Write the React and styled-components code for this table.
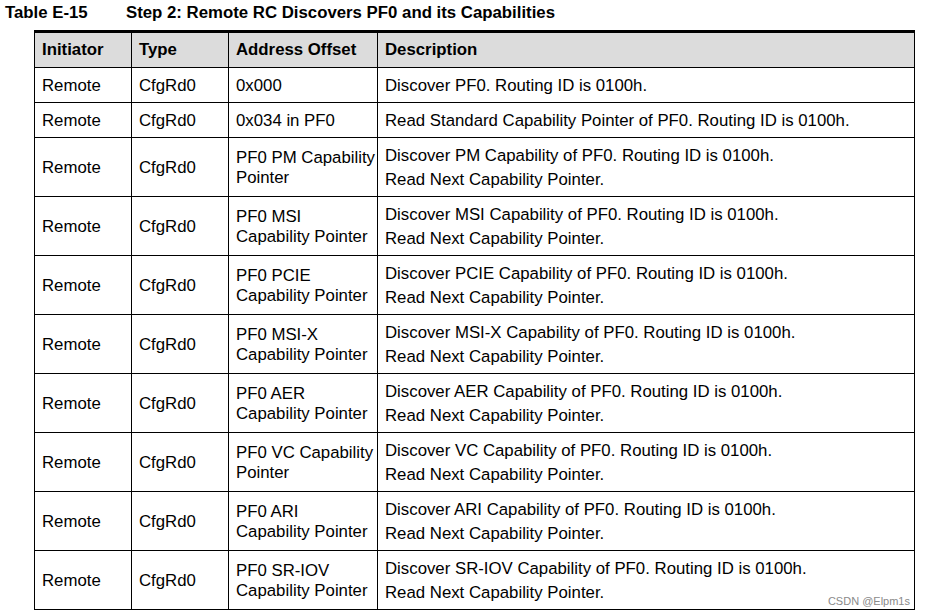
import React from 'react'
import styled, { createGlobalStyle } from 'styled-components'

const GlobalStyle = createGlobalStyle`
    body {
        margin: 0;
        background: #fff;
        font-family: "Liberation Sans", Arial, sans-serif;
        color: #000;
    }
`;

const Page = styled.div`
    position: relative;
    width: 925px;
    height: 616px;
    overflow: hidden;
`;

const TitleRow = styled.div`
    display: flex;
    height: 30px;
    padding: 4px 0 0 5px;
    box-sizing: border-box;
    font-size: 16.8px;
    font-weight: bold;
    line-height: 18px;
`;

const TableLabel = styled.span`
    width: 121px;
`;

const Table = styled.table`
    margin-left: 34px;
    width: 880px;
    border-collapse: collapse;
    border-top: 3px solid #000;
    table-layout: fixed;
    font-size: 16.8px;
`;

const HeadCell = styled.th`
    background: #dcdcdc;
    border: 1px solid #000;
    border-top: none;
    text-align: left;
    font-weight: bold;
    padding: 0 7px;
    height: 36px;
    width: ${p => p.$w}px;
    box-sizing: border-box;
`;

const Row = styled.tr`
    height: ${p => (p.$tall ? 59 : 35)}px;
`;

const Cell = styled.td`
    border: 1px solid #000;
    padding: 2px 7px 0;
    vertical-align: middle;
    line-height: ${p => (p.$lh ? p.$lh : 20)}px;
    white-space: nowrap;
`;

const Watermark = styled.div`
    position: absolute;
    right: 13px;
    top: 595px;
    font-size: 11px;
    color: #8a8a8a;
    background: #fff;
    padding: 0 2px;
`;

const caps = [
    ['PM', 'PF0 PM Capability', 'Pointer'],
    ['MSI', 'PF0 MSI', 'Capability Pointer'],
    ['PCIE', 'PF0 PCIE', 'Capability Pointer'],
    ['MSI-X', 'PF0 MSI-X', 'Capability Pointer'],
    ['AER', 'PF0 AER', 'Capability Pointer'],
    ['VC', 'PF0 VC Capability', 'Pointer'],
    ['ARI', 'PF0 ARI', 'Capability Pointer'],
    ['SR-IOV', 'PF0 SR-IOV', 'Capability Pointer'],
];

const App = () => {
    return (
        <Page>
            <GlobalStyle />
            <TitleRow>
                <TableLabel>Table E-15</TableLabel>
                <span>Step 2: Remote RC Discovers PF0 and its Capabilities</span>
            </TitleRow>
            <Table>
                <thead>
                    <tr>
                        <HeadCell $w={97}>Initiator</HeadCell>
                        <HeadCell $w={97}>Type</HeadCell>
                        <HeadCell $w={149}>Address Offset</HeadCell>
                        <HeadCell $w={537}>Description</HeadCell>
                    </tr>
                </thead>
                <tbody>
                    <Row>
                        <Cell>Remote</Cell>
                        <Cell>CfgRd0</Cell>
                        <Cell>0x000</Cell>
                        <Cell>Discover PF0. Routing ID is 0100h.</Cell>
                    </Row>
                    <Row>
                        <Cell>Remote</Cell>
                        <Cell>CfgRd0</Cell>
                        <Cell>0x034 in PF0</Cell>
                        <Cell>Read Standard Capability Pointer of PF0. Routing ID is 0100h.</Cell>
                    </Row>
                    {caps.map(([name, a1, a2]) => (
                        <Row $tall key={name}>
                            <Cell>Remote</Cell>
                            <Cell>CfgRd0</Cell>
                            <Cell>{a1}<br />{a2}</Cell>
                            <Cell $lh={24}>
                                Discover {name} Capability of PF0. Routing ID is 0100h.<br />
                                Read Next Capability Pointer.
                            </Cell>
                        </Row>
                    ))}
                </tbody>
            </Table>
            <Watermark>CSDN @Elpm1s</Watermark>
        </Page>
    )
}

export default App
